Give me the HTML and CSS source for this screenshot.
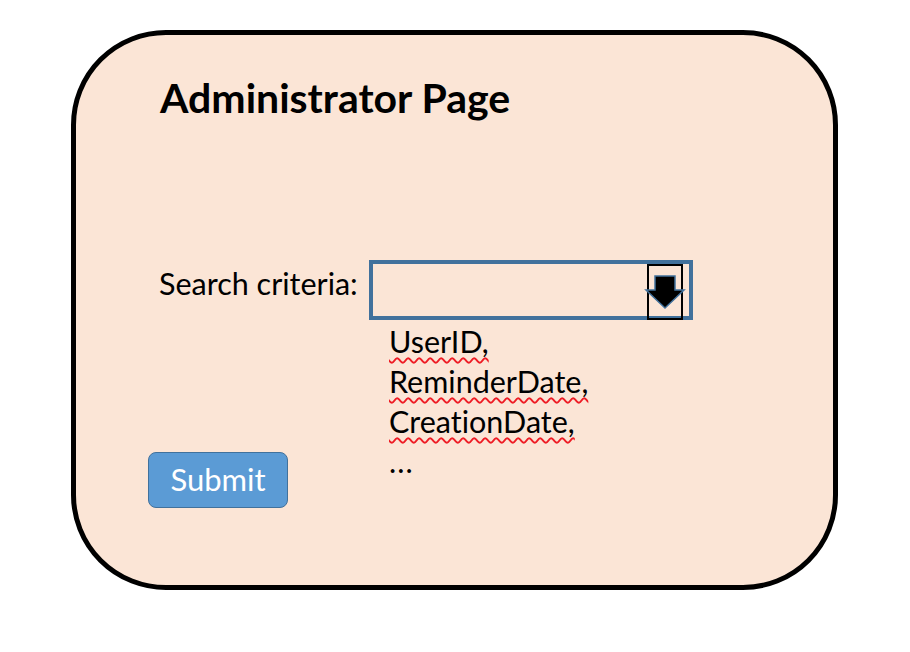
FILE: index.html
```html
<!DOCTYPE html>
<html lang="en">
<head>
<meta charset="utf-8">
<title>Administrator Page</title>
<link rel="stylesheet" href="styles.css">
</head>
<body>
<div class="card">
  <h1 class="title">Administrator Page</h1>
  <div class="form">
    <label class="label">Search criteria:</label>
    <div class="select">
      <div class="select-btn">
        <svg width="36" height="56" viewBox="0 0 36 56" overflow="visible">
          <rect x="1" y="1" width="34" height="54" fill="none" stroke="#000" stroke-width="2"/>
          <polygon points="8,12 28,12 28,26 37,26 18,44 -1,26 8,26" fill="#000" stroke="#41719C" stroke-width="1.5" stroke-linejoin="miter"/>
        </svg>
      </div>
    </div>
    <div class="actions">
      <button class="submit" type="button">Submit</button>
    </div>
    <ul class="options">
      <li><span class="spell">UserID,</span></li>
      <li><span class="spell">ReminderDate,</span></li>
      <li><span class="spell">CreationDate,</span></li>
      <li class="more">...</li>
    </ul>
  </div>
</div>
</body>
</html>
```
FILE: styles.css
```css
* { box-sizing: border-box; }
html, body { margin: 0; padding: 0; background: #ffffff; }
body {
  font-family: "Lato", "Liberation Sans", sans-serif;
  color: #000;
  font-variant-ligatures: none;
}

.card {
  margin: 30px 0 0 71px;
  width: 767px;
  height: 560px;
  border: 5px solid #000;
  border-radius: 95px;
  background: #FBE5D6;
  padding: 39px 0 0 72px;
}

.title {
  margin: 0 0 138px 12px;
  font-size: 41px;
  line-height: 48px;
  font-weight: 700;
}

.form {
  display: grid;
  grid-template-columns: 221px 324px;
}

.label {
  margin: 5px 0 0 11px;
  font-size: 30.5px;
  line-height: 36px;
}

.select {
  height: 60px;
  border: 4px solid #41719C;
  display: flex;
  justify-content: flex-end;
  align-items: flex-start;
  padding-right: 6px;
}

.select-btn {
  width: 36px;
  height: 56px;
}
.select-btn svg { display: block; overflow: visible; }

.actions { margin-top: 132px; }

.submit {
  width: 140px;
  height: 56px;
  background: #5B9BD5;
  border: 1.5px solid #41719C;
  border-radius: 8px;
  color: #fff;
  font-family: "Lato", "Liberation Sans", sans-serif;
  font-size: 31px;
  padding: 0 0 2px;
}

.options {
  list-style: none;
  margin: 1px 0 0;
  padding: 0 0 0 20px;
  font-size: 30.5px;
  line-height: 40px;
}

.more { letter-spacing: 1px; }

.spell {
  text-decoration: underline wavy #EE1C25;
  text-decoration-thickness: 1.5px;
  text-underline-offset: 4px;
}
```
